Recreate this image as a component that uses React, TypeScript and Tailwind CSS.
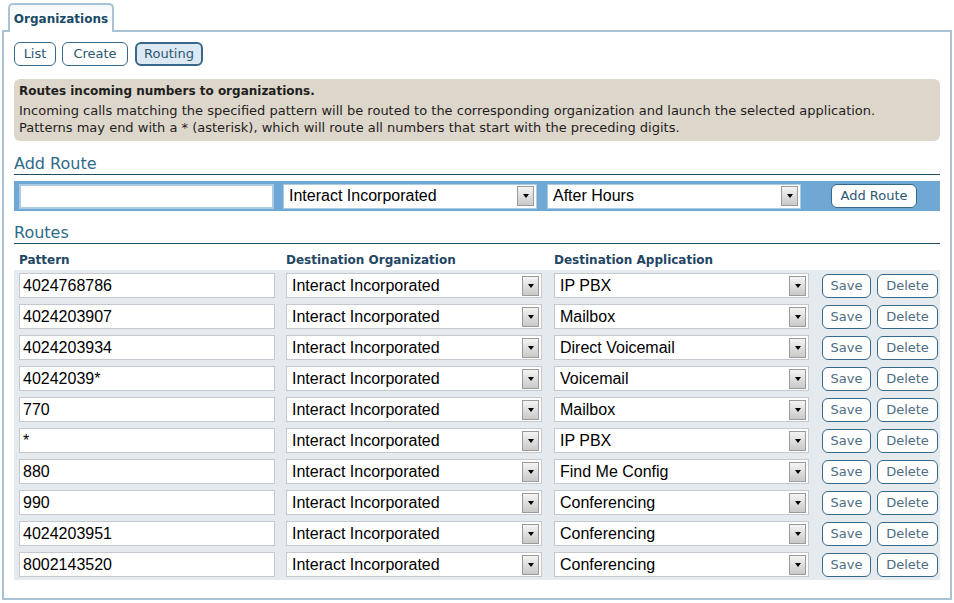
import React from "react";

const ROUTES = [
  { pattern: "4024768786", app: "IP PBX" },
  { pattern: "4024203907", app: "Mailbox" },
  { pattern: "4024203934", app: "Direct Voicemail" },
  { pattern: "40242039*", app: "Voicemail" },
  { pattern: "770", app: "Mailbox" },
  { pattern: "*", app: "IP PBX" },
  { pattern: "880", app: "Find Me Config" },
  { pattern: "990", app: "Conferencing" },
  { pattern: "4024203951", app: "Conferencing" },
  { pattern: "8002143520", app: "Conferencing" },
];

const gothic = { fontFamily: '"DejaVu Sans", Verdana, sans-serif' };
const arial = { fontFamily: '"Liberation Sans", Arial, sans-serif' };

function FakeSelect({ value, width, border }: { value: string; width: string; border: string }) {
  return (
    <div className={`flex h-[25px] items-center justify-between bg-white pl-[5px] pr-[2px] ${width} ${border}`}>
      <span className="text-[16px] leading-none text-black" style={arial}>
        {value}
      </span>
      <div className="flex h-[20px] w-[17px] items-center justify-center border border-[#9a9a9a] bg-gradient-to-b from-[#f4f4f4] to-[#c9c9c9]">
        <div className="h-0 w-0 border-x-[3.5px] border-t-[4px] border-x-transparent border-t-black" />
      </div>
    </div>
  );
}

function SmallButton({ label, width, muted }: { label: string; width: string; muted?: boolean }) {
  return (
    <button
      type="button"
      className={`flex h-[24px] items-center justify-center rounded-[6px] border border-[#36688a] bg-white text-[13px] ${width} ${
        muted ? "text-[#4d6d82]" : "text-[#2c5673]"
      }`}
      style={gothic}
    >
      {label}
    </button>
  );
}

function Heading({ title }: { title: string }) {
  return (
    <div className="border-b border-[#1e4f63] pb-[1px] text-[16px] leading-[18px] text-[#2d6a88]" style={gothic}>
      {title}
    </div>
  );
}

export default function App() {
  return (
    <div className="h-[603px] w-[954px] bg-white" style={gothic}>
      <div className="pl-[8px] pt-[3px]">
        <div className="relative z-10 -mb-[2px] inline-flex h-[29px] w-[106px] items-center justify-center rounded-t-[5px] border-2 border-b-0 border-[#a9c3d6] bg-gradient-to-b from-[#f6f9fb] to-white text-[12px] font-bold text-[#1b4a66]">
          Organizations
        </div>
      </div>
      <div className="mx-[2px] h-[570px] w-[950px] border-2 border-[#a9c3d6] px-[10px] pt-[10px]">
        <div className="flex gap-[6px]">
          <SmallButton label="List" width="w-[42px]" />
          <SmallButton label="Create" width="w-[66px]" />
          <button
            type="button"
            className="ml-[1px] flex h-[24px] w-[68px] items-center justify-center rounded-[6px] border-2 border-[#36688a] bg-[#dce9f3] text-[13px] text-[#2c5673]"
            style={gothic}
          >
            Routing
          </button>
        </div>

        <div className="mt-[13px] h-[62px] w-[926px] rounded-[6px] bg-[#ddd6cb] px-[5px] pt-[4px] text-[13px] leading-[17px] text-[#1e1e1e]">
          <div className="mb-[2px] text-[12px] font-bold">Routes incoming numbers to organizations.</div>
          <div>Incoming calls matching the specified pattern will be routed to the corresponding organization and launch the selected application.</div>
          <div>Patterns may end with a * (asterisk), which will route all numbers that start with the preceding digits.</div>
        </div>

        <div className="mt-[14px] w-[926px]">
          <Heading title="Add Route" />
          <div className="mt-[6px] flex h-[30px] items-center bg-[#6fa7d5] pl-[5px]">
            <div className="h-[25px] w-[255px] border-2 border-[#a9cbe6] bg-white" />
            <div className="ml-[9px]">
              <FakeSelect value="Interact Incorporated" width="w-[254px]" border="border border-[#a9cbe6]" />
            </div>
            <div className="ml-[10px]">
              <FakeSelect value="After Hours" width="w-[254px]" border="border border-[#a9cbe6]" />
            </div>
            <div className="ml-[30px]">
              <SmallButton label="Add Route" width="w-[86px]" />
            </div>
          </div>
        </div>

        <div className="mt-[13px] w-[926px]">
          <Heading title="Routes" />
          <div className="flex pl-[5px] pt-[8px] text-[12px] font-bold leading-[16px] text-[#1f4664]">
            <div className="w-[267px]">Pattern</div>
            <div className="w-[268px]">Destination Organization</div>
            <div>Destination Application</div>
          </div>
          <div className="mt-[2px] flex flex-col gap-[6px] bg-[#e5eaef] py-[3px] pl-[5px]">
            {ROUTES.map((route, i) => (
              <div key={i} className="flex items-center">
                <div className="flex h-[25px] w-[256px] items-center border border-[#c3c9cf] bg-white pl-[3px] text-[16px] text-black" style={arial}>
                  {route.pattern}
                </div>
                <div className="ml-[11px]">
                  <FakeSelect value="Interact Incorporated" width="w-[256px]" border="border border-[#c3c9cf]" />
                </div>
                <div className="ml-[12px]">
                  <FakeSelect value={route.app} width="w-[255px]" border="border border-[#c3c9cf]" />
                </div>
                <div className="ml-[13px]">
                  <SmallButton label="Save" width="w-[49px]" muted />
                </div>
                <div className="ml-[6px]">
                  <SmallButton label="Delete" width="w-[61px]" muted />
                </div>
              </div>
            ))}
          </div>
        </div>
      </div>
    </div>
  );
}
